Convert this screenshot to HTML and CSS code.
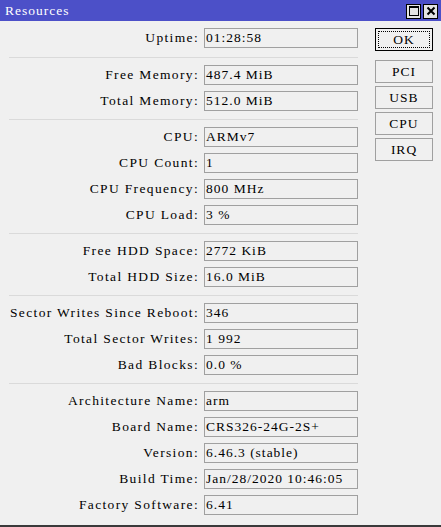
FILE: index.html
```html
<!DOCTYPE html>
<html lang="en">
<head>
    <meta charset="UTF-8">
    <meta name="viewport" content="width=device-width, initial-scale=1.0">
    <title>Resources</title>
    <link rel="stylesheet" href="styles.css">
</head>
<body>
    <div class="window">
        <div class="titlebar">
            <span class="title">Resources</span>
            <div class="title-buttons">
                <span class="tbtn">
                    <svg width="12" height="12" viewBox="0 0 12 12"><rect x="1.5" y="1.5" width="9" height="9" fill="none" stroke="#000" stroke-width="1"/><rect x="1.5" y="1.5" width="9" height="1.5" fill="#000"/></svg>
                </span>
                <span class="tbtn">
                    <svg width="12" height="12" viewBox="0 0 12 12"><path d="M2.5 2.5 L9.5 9.5 M9.5 2.5 L2.5 9.5" stroke="#000" stroke-width="2"/></svg>
                </span>
            </div>
        </div>

        <div class="content">
            <div class="form">
                <div class="row"><label>Uptime:</label><div class="value">01:28:58</div></div>
                <div class="sep first"></div>
                <div class="row"><label>Free Memory:</label><div class="value">487.4 MiB</div></div>
                <div class="row"><label>Total Memory:</label><div class="value">512.0 MiB</div></div>
                <div class="sep"></div>
                <div class="row"><label>CPU:</label><div class="value">ARMv7</div></div>
                <div class="row"><label>CPU Count:</label><div class="value">1</div></div>
                <div class="row"><label>CPU Frequency:</label><div class="value">800 MHz</div></div>
                <div class="row"><label>CPU Load:</label><div class="value">3 %</div></div>
                <div class="sep"></div>
                <div class="row"><label>Free HDD Space:</label><div class="value">2772 KiB</div></div>
                <div class="row"><label>Total HDD Size:</label><div class="value">16.0 MiB</div></div>
                <div class="sep"></div>
                <div class="row"><label>Sector Writes Since Reboot:</label><div class="value">346</div></div>
                <div class="row"><label>Total Sector Writes:</label><div class="value">1 992</div></div>
                <div class="row"><label>Bad Blocks:</label><div class="value">0.0 %</div></div>
                <div class="sep"></div>
                <div class="row"><label>Architecture Name:</label><div class="value">arm</div></div>
                <div class="row"><label>Board Name:</label><div class="value">CRS326-24G-2S+</div></div>
                <div class="row"><label>Version:</label><div class="value">6.46.3 (stable)</div></div>
                <div class="row"><label>Build Time:</label><div class="value">Jan/28/2020 10:46:05</div></div>
                <div class="row"><label>Factory Software:</label><div class="value">6.41</div></div>
            </div>

            <div class="buttons">
                <button class="btn ok">OK</button>
                <button class="btn">PCI</button>
                <button class="btn">USB</button>
                <button class="btn">CPU</button>
                <button class="btn">IRQ</button>
            </div>
        </div>
    </div>
</body>
</html>
```

FILE: styles.css
```css
body {
    margin: 0;
    font-family: "Liberation Serif", serif;
    font-size: 13.5px;
    letter-spacing: 1px;
    color: #000;
    background-color: #f0f0f0;
}
.window {
    width: 441px;
    height: 527px;
    display: flex;
    flex-direction: column;
    box-sizing: border-box;
    border-bottom: 2px solid #3a3a3a;
    background-color: #f0f0f0;
}
.titlebar {
    height: 21px;
    flex-shrink: 0;
    background-color: #4c50c8;
    display: flex;
    align-items: center;
    justify-content: space-between;
    padding: 0 3px 0 5px;
}
.title {
    color: #fff;
}
.title-buttons {
    display: flex;
    gap: 2px;
    margin-top: 1px;
}
.tbtn {
    width: 13px;
    height: 13px;
    border: 1px solid #000;
    background-color: #e4e4e4;
    display: flex;
    align-items: center;
    justify-content: center;
}
.content {
    display: flex;
    padding-top: 4px;
}
.form {
    width: 358px;
}
.row {
    display: grid;
    grid-template-columns: 198px 154px;
    column-gap: 6px;
    align-items: center;
    padding: 3px 0;
}
.row label {
    text-align: right;
    white-space: nowrap;
    letter-spacing: 1.35px;
    margin-right: -1px;
}
.value {
    height: 20px;
    box-sizing: border-box;
    border: 1px solid #a0a0a0;
    padding: 0 1px;
    line-height: 18px;
    white-space: nowrap;
    overflow: hidden;
}
.sep {
    height: 1px;
    background-color: #dadada;
    margin: 5px 0 4px 9px;
}
.sep.first {
    margin-top: 6px;
}
.buttons {
    display: flex;
    flex-direction: column;
    margin-left: 17px;
    padding-top: 3px;
    gap: 3px;
}
.btn {
    width: 58px;
    height: 23px;
    font-family: "Liberation Serif", serif;
    font-size: 13.5px;
    letter-spacing: 1px;
    color: #000;
    background-color: #f0f0f0;
    border: 1px solid #a0a0a0;
    padding: 0;
}
.btn.ok {
    border-color: #000;
    outline: 1px dotted #000;
    outline-offset: -4px;
    margin-bottom: 6px;
}
```
